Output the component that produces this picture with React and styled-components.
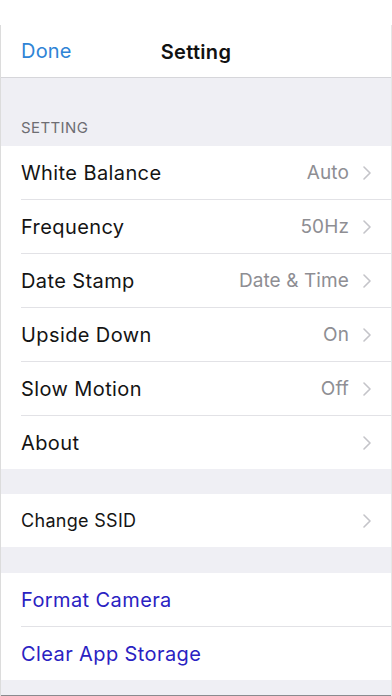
import React from "react";
import styled, { createGlobalStyle } from "styled-components";

const Global = createGlobalStyle`
  html, body { margin: 0; padding: 0; background: #ffffff; }
  body { font-family: Inter, "Noto Sans", "Liberation Sans", sans-serif; -webkit-font-smoothing: antialiased; }
`;

const Screen = styled.div`
  width: 392px;
  height: 696px;
  display: flex;
  flex-direction: column;
  background: #ffffff;
  overflow: hidden;
`;

const StatusSpace = styled.div`
  height: 25px;
  flex-shrink: 0;
`;

const Frame = styled.div`
  flex: 1;
  display: flex;
  flex-direction: column;
  border-left: 1px solid #dcdcdc;
  border-right: 1px solid #e6e6e6;
  background: #efeff4;
`;

const NavBar = styled.div`
  height: 52px;
  flex-shrink: 0;
  display: grid;
  grid-template-columns: 1fr auto 1fr;
  align-items: center;
  padding: 0 20px;
  background: #ffffff;
  border-bottom: 1px solid #d6d6da;
`;

const NavButton = styled.span`
  font-size: 20px;
  letter-spacing: 0.2px;
  color: #2f84d6;
  justify-self: start;
`;

const NavTitle = styled.span`
  font-size: 20px;
  font-weight: 600;
  letter-spacing: 0.3px;
  color: #111111;
  margin-left: 0px;
  margin-top: 1px;
`;

const SectionHeader = styled.div`
  height: ${(p) => p.$h}px;
  flex-shrink: 0;
  display: flex;
  align-items: flex-end;
  padding: 0 20px 9px;
  box-sizing: border-box;
  font-size: 15px;
  letter-spacing: 0.4px;
  color: #6d6d72;
`;

const Spacer = styled.div`
  height: ${(p) => p.$h}px;
  flex-shrink: 0;
`;

const Group = styled.div`
  background: #ffffff;
  flex-shrink: 0;
`;

const Row = styled.div`
  display: flex;
  align-items: center;
  margin-left: 20px;
  padding-right: 20px;
  box-sizing: border-box;
  border-top: ${(p) => (p.$first ? "none" : "1px solid #e2e2e6")};
  height: ${(p) => (p.$first ? 53 : 54)}px;
`;

const Label = styled.span`
  flex: 1;
  font-size: ${(p) => p.$size || 20}px;
  letter-spacing: ${(p) => (p.$size ? 0.3 : 0.4)}px;
  color: ${(p) => (p.$action ? "#2a22c2" : "#141414")};
`;

const Value = styled.span`
  font-size: 19px;
  letter-spacing: 0.1px;
  color: #8e8e93;
  margin-right: 14px;
`;

const Chevron = () => (
  <svg width="8" height="14" viewBox="0 0 8 14" fill="none">
    <path d="M1 1l6 6-6 6" stroke="#c4c4c9" strokeWidth="1.6" strokeLinecap="round" strokeLinejoin="round" />
  </svg>
);

const BottomLine = styled.div`
  height: 1px;
  background: #8a8a8e;
  flex-shrink: 0;
`;

const Tail = styled.div`
  flex: 1;
  background: #ffffff;
`;

const settings = [
  { label: "White Balance", value: "Auto" },
  { label: "Frequency", value: "50Hz" },
  { label: "Date Stamp", value: "Date & Time" },
  { label: "Upside Down", value: "On" },
  { label: "Slow Motion", value: "Off" },
  { label: "About", value: "" },
];

export default function App() {
  return (
    <>
      <Global />
      <Screen>
        <StatusSpace />
        <Frame>
          <NavBar>
            <NavButton>Done</NavButton>
            <NavTitle>Setting</NavTitle>
            <span />
          </NavBar>
          <SectionHeader $h={68}>SETTING</SectionHeader>
          <Group>
            {settings.map((s, i) => (
              <Row key={s.label} $first={i === 0}>
                <Label>{s.label}</Label>
                {s.value && <Value>{s.value}</Value>}
                <Chevron />
              </Row>
            ))}
          </Group>
          <Spacer $h={25} />
          <Group>
            <Row $first>
              <Label $size={18}>Change SSID</Label>
              <Chevron />
            </Row>
          </Group>
          <Spacer $h={26} />
          <Group>
            <Row $first>
              <Label $action>Format Camera</Label>
            </Row>
            <Row>
              <Label $action>Clear App Storage</Label>
            </Row>
          </Group>
          <Spacer $h={15} />
          <BottomLine />
          <Tail />
        </Frame>
      </Screen>
    </>
  );
}
